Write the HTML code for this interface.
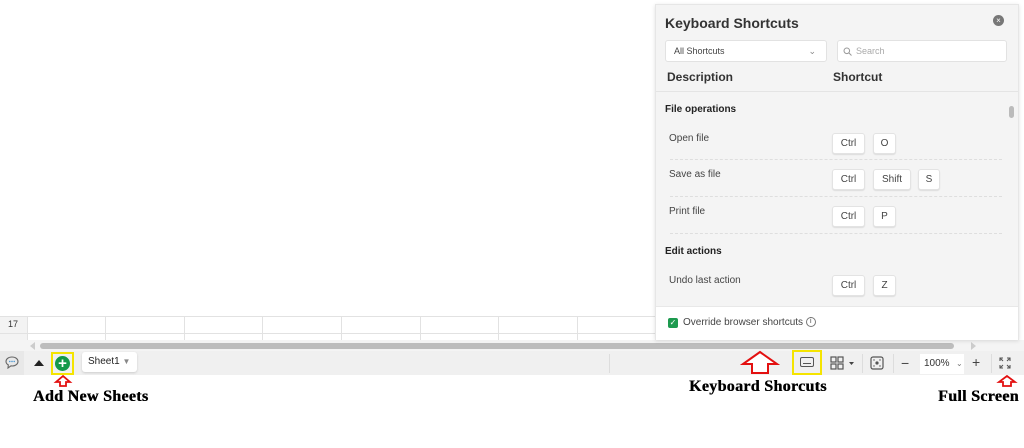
<!DOCTYPE html>
<html><head><meta charset="utf-8"><style>
*{margin:0;padding:0;box-sizing:border-box}
body{width:1024px;height:448px;background:#fff;position:relative;overflow:hidden;font-family:"Liberation Sans",sans-serif}
.a{position:absolute}
.vl{position:absolute;top:316px;height:24px;width:1px;background:#e2e2e2}
.lbl{position:absolute;font-family:"Liberation Serif",serif;font-weight:bold;font-size:16px;color:#000;letter-spacing:0.3px;text-shadow:0.4px 0 0 #000}
.key{position:absolute;height:21px;background:#fff;border:1px solid #e3e3e3;border-radius:3px;font-size:10px;color:#444;text-align:center;line-height:19px;box-shadow:0 1px 1px #ddd}
.row{position:absolute;left:10px;font-size:10px;color:#444}
.sep{position:absolute;left:10px;width:332px;border-top:1px dashed #dedede}
</style></head><body>
<div class="a" style="left:0;top:316px;width:27px;height:24px;background:#f3f3f3"></div>
<div class="a" style="left:0;top:316px;width:660px;height:1px;background:#e2e2e2"></div>
<div class="a" style="left:0;top:333px;width:660px;height:1px;background:#e2e2e2"></div>
<div class="a" style="left:8px;top:319px;font-size:9px;color:#333">17</div>
<div class="vl" style="left:27px"></div><div class="vl" style="left:105px"></div><div class="vl" style="left:184px"></div><div class="vl" style="left:262px"></div><div class="vl" style="left:341px"></div><div class="vl" style="left:420px"></div><div class="vl" style="left:498px"></div><div class="vl" style="left:577px"></div>
<div class="a" style="left:0;top:340px;width:1024px;height:11px;background:#f4f4f4"></div>
<div class="a" style="left:30px;top:342px;width:0;height:0;border:4px solid transparent;border-right:5px solid #ccc;border-left:0"></div>
<div class="a" style="left:40px;top:343px;width:914px;height:6px;background:#bdbdbd;border-radius:3px"></div>
<div class="a" style="left:971px;top:342px;width:0;height:0;border:4px solid transparent;border-left:5px solid #ccc;border-right:0"></div>
<div class="a" style="left:0;top:351px;width:1024px;height:24px;background:#f0f0f0"></div>
<div class="a" style="left:0;top:351px;width:24px;height:24px;background:#e8e8e8"></div>
<svg class="a" style="left:5px;top:356px" width="14" height="13" viewBox="0 0 14 13"><path d="M7 1C3.5 1 1 3 1 5.5c0 1.5 1 2.7 2.3 3.4L3 12l3-2.2C6.3 9.9 6.6 10 7 10c3.5 0 6-2 6-4.5S10.5 1 7 1z" fill="none" stroke="#666" stroke-width="1.1"/><circle cx="4.8" cy="5.5" r=".7" fill="#3a8fd0"/><circle cx="7" cy="5.5" r=".7" fill="#3a8fd0"/><circle cx="9.2" cy="5.5" r=".7" fill="#3a8fd0"/></svg>
<div class="a" style="left:34px;top:360px;width:0;height:0;border-left:5px solid transparent;border-right:5px solid transparent;border-bottom:6px solid #222"></div>
<div class="a" style="left:51px;top:352px;width:23px;height:23px;border:2px solid #f5e400"></div>
<div class="a" style="left:55px;top:356px;width:15px;height:15px;border-radius:50%;background:#14994a;color:#fff;font-weight:bold;font-size:15px;line-height:15px;text-align:center">+</div>
<div class="a" style="left:82px;top:352px;width:55px;height:20px;background:#fff;border-radius:3px;box-shadow:0 1px 2px #ccc;font-size:10px;color:#222;line-height:20px;padding-left:6px">Sheet1 <span style="color:#888;font-size:8px">▼</span></div>
<div class="a" style="left:609px;top:354px;width:1px;height:19px;background:#ddd"></div>
<svg class="a" style="left:740px;top:350px" width="52" height="25" viewBox="0 0 52 25"><path d="M20 2 L3 14 H12 V23 H28 V14 H37 Z" fill="#fff" stroke="#e31010" stroke-width="2"/></svg>
<div class="a" style="left:792px;top:350px;width:30px;height:25px;border:2px solid #f5e400"></div>
<div class="a" style="left:800px;top:357px;width:14px;height:10px;border:1.3px solid #555;border-radius:2px"></div>
<div class="a" style="left:803px;top:363px;width:8px;height:1px;background:#555"></div>
<svg class="a" style="left:830px;top:356px" width="26" height="14" viewBox="0 0 26 14"><g fill="none" stroke="#555" stroke-width="1.2"><rect x="1" y="1" width="5" height="5"/><rect x="8" y="1" width="5" height="5"/><rect x="1" y="8" width="5" height="5"/><rect x="8" y="8" width="5" height="5"/></g><path d="M19 6h5l-2.5 3z" fill="#444"/></svg>
<div class="a" style="left:862px;top:354px;width:1px;height:19px;background:#ddd"></div>
<svg class="a" style="left:870px;top:356px" width="14" height="14" viewBox="0 0 14 14"><rect x="1" y="1" width="12" height="12" rx="2" fill="none" stroke="#555" stroke-width="1.2"/><circle cx="7" cy="7" r="1.6" fill="#555"/><circle cx="4" cy="4" r=".7" fill="#555"/><circle cx="10" cy="4" r=".7" fill="#555"/><circle cx="4" cy="10" r=".7" fill="#555"/><circle cx="10" cy="10" r=".7" fill="#555"/></svg>
<div class="a" style="left:893px;top:354px;width:1px;height:19px;background:#ddd"></div>
<div class="a" style="left:901px;top:355px;font-size:14px;color:#444">−</div>
<div class="a" style="left:920px;top:354px;width:44px;height:20px;background:#fff;font-size:10px;color:#333;line-height:20px;padding-left:4px">100%<span style="position:absolute;left:36px;color:#777;font-size:8px">⌄</span></div>
<div class="a" style="left:972px;top:354px;font-size:14px;color:#444">+</div>
<div class="a" style="left:991px;top:354px;width:1px;height:19px;background:#ddd"></div>
<svg class="a" style="left:999px;top:357px" width="12" height="12" viewBox="0 0 12 12"><g fill="none" stroke="#555" stroke-width="1.1"><path d="M1 4V1h3M8 1h3v3M11 8v3H8M4 11H1V8M1 1l3 3M11 1L8 4M11 11L8 8M1 11l3-3"/></g></svg>
<svg class="a" style="left:996px;top:375px" width="22" height="12" viewBox="0 0 22 12"><path d="M11 1L3 7h4v4h8V7h4z" fill="#fff" stroke="#e31010" stroke-width="1.8"/></svg>
<svg class="a" style="left:53px;top:375px" width="20" height="12" viewBox="0 0 20 12"><path d="M10 1L3 7h4v4h6V7h4z" fill="#fff" stroke="#e31010" stroke-width="1.8"/></svg>
<div class="lbl" style="left:33px;top:388px">Add New Sheets</div>
<div class="lbl" style="left:689px;top:378px">Keyboard Shorcuts</div>
<div class="lbl" style="left:938px;top:388px">Full Screen</div>
<div class="a" style="left:655px;top:4px;width:364px;height:336px;background:#f4f4f4;border:1px solid #e6e6e6;box-shadow:0 1px 4px rgba(0,0,0,.12)">
 <div class="a" style="left:9px;top:10px;font-size:14px;font-weight:bold;color:#333">Keyboard Shortcuts</div>
 <div class="a" style="left:337px;top:10px;width:11px;height:11px;border-radius:50%;background:#777;color:#fff;font-size:8px;line-height:11px;text-align:center">×</div>
 <div class="a" style="left:9px;top:35px;width:162px;height:22px;background:#fff;border:1px solid #e2e2e2;border-radius:3px;font-size:9px;color:#444;line-height:20px;padding-left:8px">All Shortcuts<span style="position:absolute;right:10px;color:#888">⌄</span></div>
 <div class="a" style="left:181px;top:35px;width:170px;height:22px;background:#fff;border:1px solid #e2e2e2;border-radius:3px;font-size:9px;color:#aaa;line-height:20px;padding-left:18px">Search</div>
 <svg class="a" style="left:187px;top:42px" width="9" height="9" viewBox="0 0 9 9"><circle cx="3.8" cy="3.8" r="2.8" fill="none" stroke="#999"/><path d="M6 6l2.5 2.5" stroke="#999"/></svg>
 <div class="a" style="left:11px;top:65px;font-size:12px;font-weight:bold;color:#333">Description</div>
 <div class="a" style="left:177px;top:65px;font-size:12px;font-weight:bold;color:#333">Shortcut</div>
 <div class="a" style="left:0;top:86px;width:362px;height:1px;background:#e4e4e4"></div>
 <div class="a" style="left:9px;top:99px;font-size:10px;font-weight:bold;color:#222">File operations</div>
 <div class="row" style="left:13px;top:128px">Open file</div>
 <div class="key" style="left:176px;top:128px;width:33px">Ctrl</div><div class="key" style="left:217px;top:128px;width:23px">O</div>
 <div class="sep" style="top:154px;left:14px"></div>
 <div class="row" style="left:13px;top:164px">Save as file</div>
 <div class="key" style="left:176px;top:164px;width:33px">Ctrl</div><div class="key" style="left:217px;top:164px;width:38px">Shift</div><div class="key" style="left:262px;top:164px;width:22px">S</div>
 <div class="sep" style="top:191px;left:14px"></div>
 <div class="row" style="left:13px;top:201px">Print file</div>
 <div class="key" style="left:176px;top:201px;width:33px">Ctrl</div><div class="key" style="left:217px;top:201px;width:23px">P</div>
 <div class="sep" style="top:228px;left:14px"></div>
 <div class="a" style="left:9px;top:241px;font-size:10px;font-weight:bold;color:#222">Edit actions</div>
 <div class="row" style="left:13px;top:270px">Undo last action</div>
 <div class="key" style="left:176px;top:270px;width:33px">Ctrl</div><div class="key" style="left:217px;top:270px;width:23px">Z</div>
 <div class="a" style="left:353px;top:101px;width:5px;height:12px;border-radius:3px;background:#bbb"></div>
 <div class="a" style="left:0;top:301px;width:362px;height:34px;background:#fff;border-top:1px solid #e8e8e8"></div>
 <div class="a" style="left:12px;top:313px;width:10px;height:10px;border-radius:2px;background:#1d9a4f;color:#fff;font-size:8px;line-height:10px;text-align:center">✓</div>
 <div class="a" style="left:27px;top:312px;font-size:10px;color:#444">Override browser shortcuts <span style="display:inline-block;width:10px;height:10px;border:1px solid #777;border-radius:50%;font-size:7px;line-height:8px;text-align:center;vertical-align:middle">i</span></div>
</div>
</body></html>
